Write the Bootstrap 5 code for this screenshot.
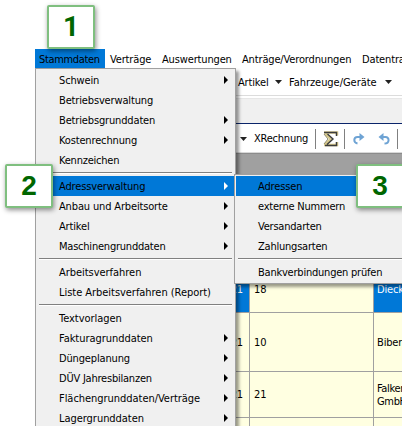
<!DOCTYPE html>
<html lang="de">

<head>
  <meta charset="UTF-8" />
  <title>Stammdaten</title>
  <meta name="viewport" content="width=device-width, initial-scale=1.0" />
  <link href="https://cdn.jsdelivr.net/npm/bootstrap@5.3.0/dist/css/bootstrap.min.css" rel="stylesheet" />
  <style>
    body {
      width: 402px;
      height: 426px;
      font-family: "DejaVu Sans Condensed", "DejaVu Sans", sans-serif;
      font-stretch: condensed;
      font-size: 11px;
      letter-spacing: -0.15px;
      line-height: 20px;
      color: #000;
      background: #fff;
    }

    .app { margin-left: 35px; padding-top: 49px; height: 426px; }
    .tight { letter-spacing: -0.33px; }
    .snug { letter-spacing: -0.22px; }
    .loose { letter-spacing: -0.04px; }

    /* Menüleiste */
    .menubar { height: 19px; line-height: 22px; }
    .menubar-item { flex: none; padding-left: 5px; }
    .menubar-item.active { width: 70px; padding-left: 4px; background: #0078d7; }
    .w-vertraege { width: 52px; }
    .w-auswertungen { width: 80px; }
    .w-antraege { width: 120px; }

    /* Werkzeugleisten */
    .tools-top { height: 28px; padding: 1px 0 0 203px; border-bottom: 1px solid #dcdcdc; line-height: 27px; }
    .strip { height: 26px; margin-top: 2px; background: #f0f0f0; border-top: 1px solid #e6e6e6; border-bottom: 1px solid #0a246a; }
    .tools-bottom { height: 29px; padding: 2px 0 0 205px; line-height: 20px; border-bottom: 1px solid #d8d8d8; }
    .band { height: 113px; background: #a0a0a0; border-top: 1px solid #8c8c8c; }
    .tool-label { flex: none; }
    .w-artikel { width: 37px; }
    .w-fahrzeuge { width: 96px; margin-left: 7px; }
    .w-xrechnung { width: 61px; margin-left: 7px; }
    .caret { flex: none; width: 7px; height: 4px; background: #222; clip-path: polygon(0 0, 100% 0, 50% 100%); }
    .divider { flex: none; width: 1px; height: 20px; background: #808080; }
    .ico-sum { margin: 0 5px 0 7px; }
    .ico-redo { margin: 0 13px 0 8px; }
    .ico-undo { margin-right: 7px; }

    /* Aufklappmenüs */
    .popup { position: absolute; background: #f0f0f0; border: 1px solid #a0a0a0; box-shadow: 3px 3px 3px rgba(0, 0, 0, .4); }
    .popup-main { left: 35px; top: 68px; width: 201px; height: 370px; padding: 1px 1px 0; }
    .popup-sub { left: 234px; top: 174px; width: 180px; height: 110px; padding: 1px 1px 0; }
    .entry { height: 20px; line-height: 22px; padding: 0 6px 0 22px; }
    .entry.active { background: #0078d7; }
    .entry .arrow { width: 4px; height: 8px; margin-top: 6px; background: #000; clip-path: polygon(0 0, 100% 50%, 0 100%); }
    .entry.active .arrow { background: #fff; }
    .rule { height: 2px; margin: 2px; background: #808080; border-bottom: 1px solid #fff; }

    /* Datentabelle */
    .grid-row { background: #ffffe1; border-bottom: 1px solid #a0a0a0; line-height: 13px; }
    .row-first { height: 47px; }
    .row-second { height: 59px; }
    .row-other { height: 46px; }
    .cell { flex: none; border-right: 1px solid #a0a0a0; }
    .cell-a { width: 215px; padding-right: 6px; }
    .cell-b { width: 124px; padding-left: 4px; }
    .cell-c { width: 60px; padding-left: 3px; }
    .chosen { background: #0078d7; color: #fff; }

    /* Nummernmarken */
    .step {
      position: absolute; width: 48px; height: 44px;
      border: 2px solid #7fbf7f; border-radius: 2px; background: #fff;
      box-shadow: 1px 2px 5px rgba(0, 0, 0, .45);
      font: bold 28px/44px "Liberation Sans", Arial, sans-serif;
      letter-spacing: 0; color: #060;
    }
    .step-1 { left: 47px; top: 5px; font-family: Roboto, sans-serif; }
    .step-2 { left: 5px; top: 164px; }
    .step-3 { left: 356px; top: 164px; }
  </style>
</head>

<body class="position-relative overflow-hidden">
  <div class="app overflow-hidden">
    <nav class="menubar d-flex text-nowrap">
      <span class="menubar-item active tight">Stammdaten</span>
      <span class="menubar-item w-vertraege">Verträge</span>
      <span class="menubar-item w-auswertungen">Auswertungen</span>
      <span class="menubar-item w-antraege">Anträge/Verordnungen</span>
      <span class="menubar-item">Datentransfer</span>
    </nav>

    <div class="tools-top d-flex align-items-center text-nowrap">
      <span class="tool-label w-artikel">Artikel</span>
      <i class="caret"></i>
      <span class="tool-label w-fahrzeuge loose">Fahrzeuge/Geräte</span>
      <i class="caret"></i>
    </div>
    <div class="strip"></div>
    <div class="tools-bottom d-flex align-items-center text-nowrap">
      <i class="caret"></i>
      <span class="tool-label w-xrechnung snug">XRechnung</span>
      <i class="divider"></i>
      <svg class="ico-sum flex-shrink-0" width="16" height="16" viewBox="0 0 16 16">
        <path d="M1 1.500h13v3M2.500 3l5.500 5-5.500 5M1 14h13v-3" fill="none" stroke="#d6c88a" stroke-width="2.500" />
        <path d="M1 1.500h12.500V5M4.500 3l5.500 5-6 5.500M2 14.500h11.500V11" fill="none" stroke="#3c3c3c" stroke-width="1.400" />
        <path d="M1 3l4 5-4 5" fill="none" stroke="#8f8a6c" stroke-width="1" />
      </svg>
      <i class="divider"></i>
      <svg class="ico-redo flex-shrink-0" width="12" height="12" viewBox="0 0 12 12">
        <path d="M4.500 10.500C0 9.500.5 4 4.500 4H8" fill="none" stroke="#6ea3d4" stroke-width="2" />
        <path d="M6.500 0l5 4-5 4z" fill="#6ea3d4" />
      </svg>
      <svg class="ico-undo flex-shrink-0" width="12" height="12" viewBox="0 0 12 12">
        <path d="M6.500 10.500C12 10.500 11.500 4 7.500 4H4" fill="none" stroke="#6ea3d4" stroke-width="2" />
        <path d="M5.500 0l-5 4 5 4z" fill="#6ea3d4" />
      </svg>
      <i class="divider"></i>
    </div>
    <div class="band"></div>

    <div class="grid-table text-nowrap">
      <div class="grid-row row-first d-flex">
        <div class="cell cell-a chosen d-flex align-items-center justify-content-end">21</div>
        <div class="cell cell-b d-flex align-items-center">18</div>
        <div class="cell cell-c chosen d-flex align-items-center">Dieckmann</div>
      </div>
      <div class="grid-row row-second d-flex">
        <div class="cell cell-a d-flex align-items-center justify-content-end">21</div>
        <div class="cell cell-b d-flex align-items-center">10</div>
        <div class="cell cell-c d-flex align-items-center">Biber</div>
      </div>
      <div class="grid-row row-other d-flex">
        <div class="cell cell-a d-flex align-items-center justify-content-end">21</div>
        <div class="cell cell-b d-flex align-items-center">21</div>
        <div class="cell cell-c tight d-flex align-items-center">Falken<br>GmbH</div>
      </div>
      <div class="grid-row row-other d-flex">
        <div class="cell cell-a"></div>
        <div class="cell cell-b"></div>
        <div class="cell cell-c"></div>
      </div>
    </div>
  </div>

  <div class="popup popup-main text-nowrap">
    <div class="entry d-flex align-items-start justify-content-between">Schwein<i class="arrow"></i></div>
    <div class="entry">Betriebsverwaltung</div>
    <div class="entry d-flex align-items-start justify-content-between">Betriebsgrunddaten<i class="arrow"></i></div>
    <div class="entry d-flex align-items-start justify-content-between">Kostenrechnung<i class="arrow"></i></div>
    <div class="entry snug">Kennzeichen</div>
    <div class="rule"></div>
    <div class="entry active d-flex align-items-start justify-content-between">Adressverwaltung<i class="arrow"></i></div>
    <div class="entry d-flex align-items-start justify-content-between">Anbau und Arbeitsorte<i class="arrow"></i></div>
    <div class="entry d-flex align-items-start justify-content-between">Artikel<i class="arrow"></i></div>
    <div class="entry snug d-flex align-items-start justify-content-between">Maschinengrunddaten<i class="arrow"></i></div>
    <div class="rule"></div>
    <div class="entry loose">Arbeitsverfahren</div>
    <div class="entry loose">Liste Arbeitsverfahren (Report)</div>
    <div class="rule"></div>
    <div class="entry loose">Textvorlagen</div>
    <div class="entry loose d-flex align-items-start justify-content-between">Fakturagrunddaten<i class="arrow"></i></div>
    <div class="entry d-flex align-items-start justify-content-between">Düngeplanung<i class="arrow"></i></div>
    <div class="entry snug d-flex align-items-start justify-content-between">DÜV Jahresbilanzen<i class="arrow"></i></div>
    <div class="entry loose d-flex align-items-start justify-content-between">Flächengrunddaten/Verträge<i class="arrow"></i></div>
    <div class="entry loose d-flex align-items-start justify-content-between">Lagergrunddaten<i class="arrow"></i></div>
  </div>

  <div class="popup popup-sub text-nowrap">
    <div class="entry active">Adressen</div>
    <div class="entry snug">externe Nummern</div>
    <div class="entry snug">Versandarten</div>
    <div class="entry snug">Zahlungsarten</div>
    <div class="rule"></div>
    <div class="entry snug">Bankverbindungen prüfen</div>
  </div>

  <div class="step step-1 d-flex align-items-center justify-content-center">1</div>
  <div class="step step-2 d-flex align-items-center justify-content-center">2</div>
  <div class="step step-3 d-flex align-items-center justify-content-center">3</div>

  <script src="https://cdn.jsdelivr.net/npm/bootstrap@5.3.0/dist/js/bootstrap.bundle.min.js"></script>
</body>

</html>
